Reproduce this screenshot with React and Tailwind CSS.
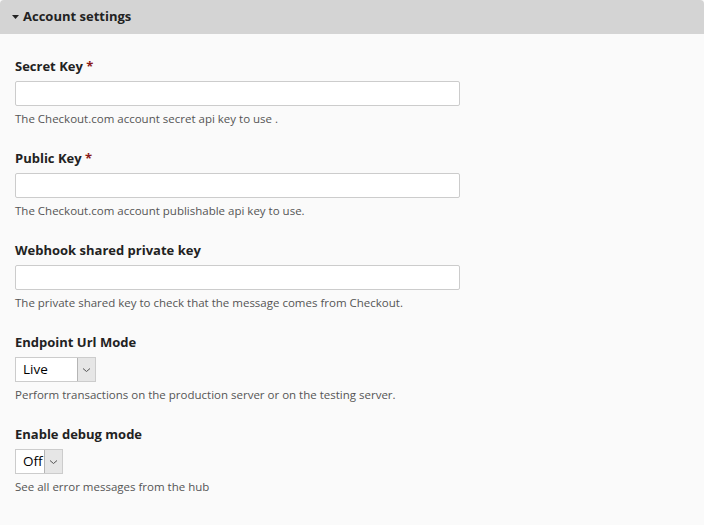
export default function App() {
  const font = { fontFamily: '"Open Sans", "DejaVu Sans", sans-serif' };
  const Label = ({ children }) => (
    <div className="text-[13px] font-bold text-[#222] leading-[16px] mb-[7px]">{children}</div>
  );
  const Desc = ({ children }) => (
    <div className="text-[11.5px] text-[#555] leading-[14px] mt-[6px]">{children}</div>
  );
  const Field = ({ label, required, desc }) => (
    <div className="mb-[24px]">
      <Label>
        {label}
        {required && <span className="text-[#8b1a1a]"> *</span>}
      </Label>
      <div className="w-[445px] h-[25px] bg-white border border-[#cccccc] rounded-[2px]" />
      <Desc>{desc}</Desc>
    </div>
  );
  const Select = ({ label, value, width, desc }) => (
    <div className="mb-[24px]">
      <Label>{label}</Label>
      <div className="flex h-[25px] border border-[#cccccc] bg-white" style={{ width }}>
        <div className="flex-1 flex items-center pl-[7px] text-[13.5px] text-black">{value}</div>
        <div className="w-[18px] h-full border-l border-[#b5b5b5] bg-[#e6e6e6] flex items-center justify-center">
          <svg width="9" height="6" viewBox="0 0 9 6"><path d="M1 1.5 L4.5 4.5 L8 1.5" fill="none" stroke="#555" strokeWidth="1" /></svg>
        </div>
      </div>
      <Desc>{desc}</Desc>
    </div>
  );
  return (
    <div className="w-[704px] h-[525px] bg-[#fafafa] overflow-hidden" style={font}>
      <div className="h-[34px] bg-[#d4d4d4] rounded-t-[4px] flex items-center pl-[12px]">
        <svg width="7" height="5" viewBox="0 0 7 5" className="mr-[4px]"><path d="M0 0 L7 0 L3.5 4 Z" fill="#222" /></svg>
        <span className="text-[13px] font-bold text-[#222]">Account settings</span>
      </div>
      <div className="pl-[15px] pt-[24px]">
        <Field label="Secret Key" required desc="The Checkout.com account secret api key to use ." />
        <Field label="Public Key" required desc="The Checkout.com account publishable api key to use." />
        <Field label="Webhook shared private key" desc="The private shared key to check that the message comes from Checkout." />
        <Select label="Endpoint Url Mode" value="Live" width={81} desc="Perform transactions on the production server or on the testing server." />
        <Select label="Enable debug mode" value="Off" width={48} desc="See all error messages from the hub" />
      </div>
    </div>
  );
}
